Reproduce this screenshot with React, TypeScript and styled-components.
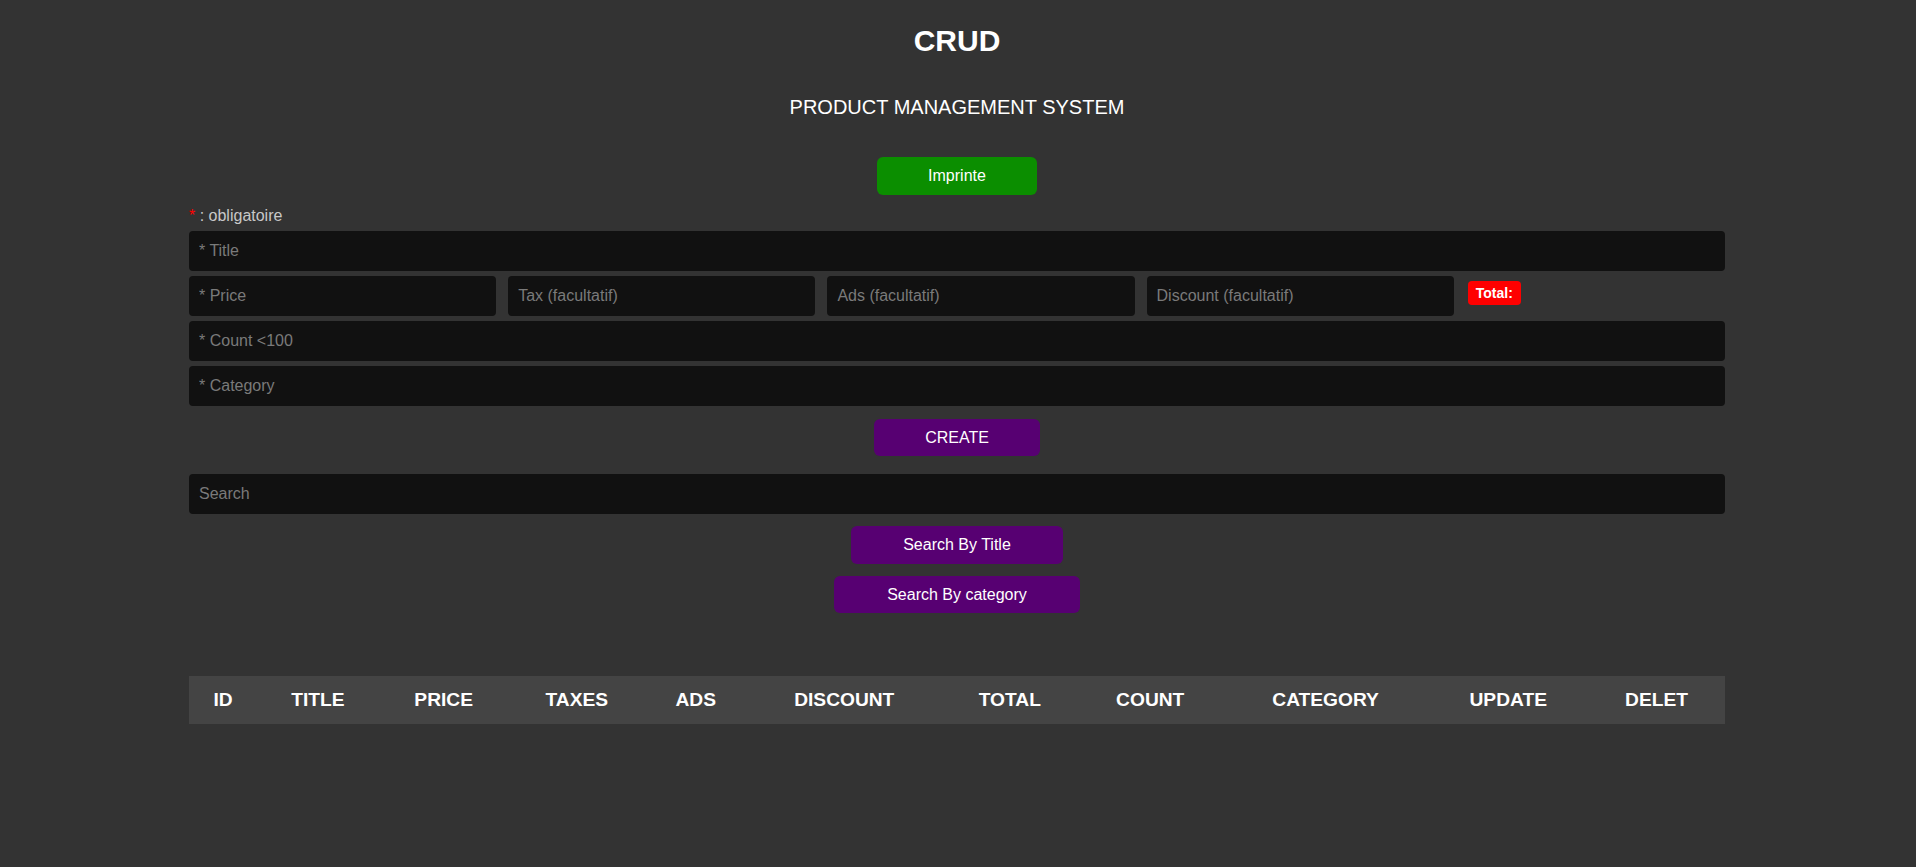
import React from "react";
import styled, { createGlobalStyle } from "styled-components";

const GlobalStyle = createGlobalStyle`
  html, body {
    margin: 0;
    padding: 0;
    background: #333333;
  }
  body {
    font-family: "Liberation Sans", Arial, sans-serif;
    color: #ffffff;
  }
  * { box-sizing: border-box; }
`;

const Page = styled.div`
  width: 1536px;
  margin: 0 191px 0 189px;
  display: flex;
  flex-direction: column;
  padding-bottom: 40px;
`;

const Head = styled.header`
  display: flex;
  flex-direction: column;
  align-items: center;
  text-align: center;
`;

const Title = styled.h1`
  margin: 23px 0 0;
  font-size: 30px;
  line-height: 36px;
  font-weight: 700;
  color: #ffffff;
`;

const Subtitle = styled.p`
  margin: 36px 0 0;
  font-size: 20px;
  line-height: 24px;
  font-weight: 400;
  color: #ffffff;
`;

const Button = styled.button<{ $w: number; $bg: string; $h?: number }>`
  display: block;
  align-self: center;
  width: ${(p) => p.$w}px;
  height: ${(p) => p.$h ?? 38}px;
  padding: 0;
  border: none;
  border-radius: 6px;
  background: ${(p) => p.$bg};
  color: #ffffff;
  font-family: "Liberation Sans", Arial, sans-serif;
  font-size: 16px;
  line-height: 18px;
  cursor: pointer;
`;

const Note = styled.div`
  margin-top: 12px;
  font-size: 16px;
  line-height: 18px;
  color: #c8c8c8;
`;

const Star = styled.span`
  color: #ff0000;
`;

const Form = styled.div`
  display: flex;
  flex-direction: column;
  gap: 5px;
  margin-top: 6px;
`;

const Input = styled.input<{ $w?: string }>`
  display: block;
  width: ${(p) => p.$w ?? "100%"};
  flex: none;
  height: 40px;
  padding: 0 10px;
  border: none;
  outline: none;
  border-radius: 4px;
  background: #111111;
  color: #ffffff;
  font-family: "Liberation Sans", Arial, sans-serif;
  font-size: 16px;
  &::placeholder {
    color: #7a7a7a;
  }
`;

const PriceRow = styled.div`
  display: flex;
  align-items: flex-start;
  gap: 12px;
`;

const TotalBadge = styled.small`
  margin: 5px 0 0 2px;
  height: 24px;
  padding: 0 8px;
  display: inline-flex;
  align-items: center;
  border-radius: 4px;
  background: #ff0000;
  color: #ffffff;
  font-size: 14px;
  font-weight: 700;
`;

const Spacer = styled.div<{ $h: number }>`
  height: ${(p) => p.$h}px;
  flex: none;
`;

const Table = styled.table`
  width: 100%;
  border-collapse: collapse;
  margin-top: 63px;
`;

const HeadRow = styled.tr`
  background: #444444;
`;

const Th = styled.th`
  height: 48px;
  padding: 0 12px;
  font-size: 19.2px;
  font-weight: 700;
  color: #ffffff;
  text-align: center;
  text-transform: uppercase;
`;

const columns = [
  "ID",
  "TITLE",
  "PRICE",
  "TAXES",
  "ADS",
  "DISCOUNT",
  "TOTAL",
  "COUNT",
  "CATEGORY",
  "UPDATE",
  "DELET",
];

export default function App() {
  return (
    <>
      <GlobalStyle />
      <Page>
        <Head>
          <Title>CRUD</Title>
          <Subtitle>PRODUCT MANAGEMENT SYSTEM</Subtitle>
        </Head>
        <Spacer $h={38} />
        <Button $w={160} $bg="#0b8e00">Imprinte</Button>
        <Note>
          <Star>*</Star> : obligatoire
        </Note>
        <Form>
          <Input placeholder="* Title" />
          <PriceRow>
            <Input $w="20%" placeholder="* Price" />
            <Input $w="20%" placeholder="Tax (facultatif)" />
            <Input $w="20%" placeholder="Ads (facultatif)" />
            <Input $w="20%" placeholder="Discount (facultatif)" />
            <TotalBadge>Total:</TotalBadge>
          </PriceRow>
          <Input placeholder="* Count <100" />
          <Input placeholder="* Category" />
        </Form>
        <Spacer $h={13} />
        <Button $w={166} $h={37} $bg="#570072">CREATE</Button>
        <Spacer $h={18} />
        <Input placeholder="Search" />
        <Spacer $h={12} />
        <Button $w={212} $bg="#570072">Search By Title</Button>
        <Spacer $h={12} />
        <Button $w={246} $h={37} $bg="#570072">Search By category</Button>
        <Table>
          <thead>
            <HeadRow>
              {columns.map((c) => (
                <Th key={c}>{c}</Th>
              ))}
            </HeadRow>
          </thead>
          <tbody></tbody>
        </Table>
      </Page>
    </>
  );
}
